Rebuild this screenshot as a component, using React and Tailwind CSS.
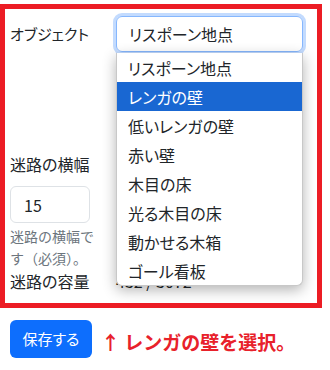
import React from 'react';

const options = [
  'リスポーン地点',
  'レンガの壁',
  '低いレンガの壁',
  '赤い壁',
  '木目の床',
  '光る木目の床',
  '動かせる木箱',
  'ゴール看板',
];

const App = () => {
  return (
    <div className="w-[330px] h-[370px] bg-white text-[#212529] overflow-hidden [font-family:'Noto_Sans_CJK_JP','Noto_Sans',sans-serif] [font-feature-settings:'palt']">
      {/* Red frame */}
      <div className="relative mt-[4px] w-[322px] h-[304px] border-[5px] border-[#ec1c24] pl-[5px] pt-[7px]">
        {/* Object select row */}
        <div className="flex items-center">
          <label className="w-[106px] text-[15px] leading-6">オブジェクト</label>
          <div className="w-[187px] h-[36px] flex items-center px-[12px] border border-[#86b7fe] rounded-md ring-[3px] ring-[#c3dbfe] text-[16px]">
            リスポーン地点
          </div>
        </div>

        {/* Width row */}
        <div className="flex mt-[100px]">
          <div className="w-[106px] flex flex-col">
            <label className="text-[16px] leading-6">迷路の横幅</label>
            <div className="mt-[10px] w-[80px] h-[37px] flex items-center pl-[13px] border border-[#dee2e6] rounded-md text-[16px]">
              15
            </div>
            <p className="mt-[2px] text-[14px] leading-[22px] text-[#6c757d] [font-feature-settings:normal]">
              迷路の横幅で<br />す（必須）。
            </p>
          </div>
          <div className="w-[187px] h-[55px] border-r-2 border-[#2aa6c8]"></div>
        </div>

        {/* Capacity row */}
        <div className="flex items-center">
          <span className="w-[106px] text-[16px] leading-6">迷路の容量</span>
          <span className="text-[16px] leading-6">432 / 3072</span>
        </div>

        {/* Open dropdown list */}
        <ul className="absolute left-[111px] top-[44px] z-10 w-[187px] bg-white border border-[#c8c8c8] border-t-0 rounded-b-md shadow-[0_4px_14px_rgba(0,0,0,0.3)] overflow-hidden">
          {options.map((opt, i) => (
            <li
              key={opt}
              className={`h-[29px] flex items-center pl-[11px] text-[16px] ${
                i === 1 ? 'bg-[#1967d2] text-white' : 'text-[#212529]'
              }`}
            >
              {opt}
            </li>
          ))}
        </ul>
      </div>

      {/* Footer */}
      <div className="flex items-center mt-[12px] pl-[10px]">
        <button className="w-[82px] h-[38px] rounded-md bg-[#0d6efd] text-white text-[15px]">
          保存する
        </button>
        <span className="ml-[9px] mt-[6px] text-[19px] font-bold text-[#e8212b] [font-feature-settings:normal]">↑ レンガの壁を選択。</span>
      </div>
    </div>
  );
};

export default App;
